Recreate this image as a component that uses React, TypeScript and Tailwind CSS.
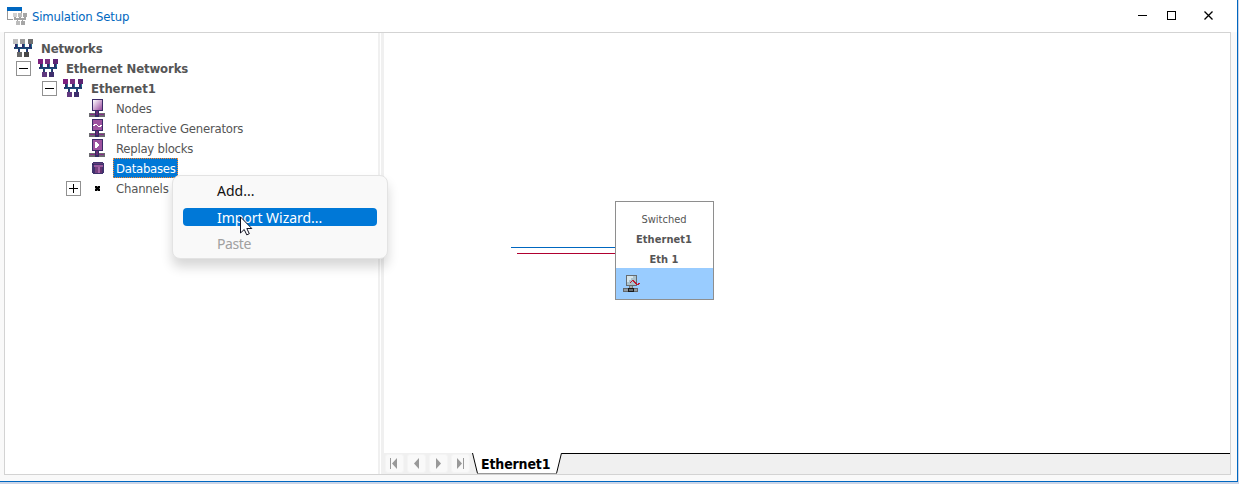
import React from "react";

const ui = "font-['DejaVu_Sans_Condensed','DejaVu_Sans',sans-serif] [font-stretch:75%]";

function NetIcon({ gray = false }: { gray?: boolean }) {
  const c = gray
    ? ["#c0c0c0", "#9c9c9c", "#707070", "#686868", "#484848"]
    : ["#7b1f7d", "#783080", "#5c2472", "#60387f", "#3f2e6d"];
  return (
    <svg width="20" height="18" shapeRendering="crispEdges" className="shrink-0">
      <path d="M2 5h2v3h-2zM9 5h2v3h-2zM16 5h2v3h-2zM5 10h2v3h-2zM13 10h2v3h-2z" fill="#2f2a68" />
      <path d="M4 5h1v4h-1zM11 5h1v4h-1zM18 5h1v4h-1z" fill="#1f7390" />
      <path d="M1 8h18v2h-18z" fill="#20386f" />
      <path d="M2 9h16v1h-16zM6 10h1v3h-1zM13 10h1v3h-1z" fill="#1b4c78" />
      <rect x="0" y="0" width="5" height="5" fill={c[0]} />
      <rect x="7" y="0" width="5" height="5" fill={c[1]} />
      <rect x="15" y="0" width="5" height="5" fill={c[2]} />
      <rect x="4" y="13" width="5" height="5" fill={c[3]} />
      <rect x="11" y="13" width="5" height="5" fill={c[4]} />
    </svg>
  );
}

function NodeIcon({ kind }: { kind: "node" | "wave" | "play" }) {
  return (
    <svg width="16" height="18" shapeRendering="crispEdges" className="shrink-0">
      <defs>
        <linearGradient id="screen" x1="0" y1="0" x2="1" y2="1">
          <stop offset="0" stopColor="#fff" />
          <stop offset=".55" stopColor="#c99ccc" />
          <stop offset="1" stopColor="#984b9b" />
        </linearGradient>
      </defs>
      <rect x="0" y="14" width="16" height="4" fill="#6b6b70" />
      <rect x="1" y="15" width="14" height="1" fill="#852d87" />
      <rect x="6" y="11" width="4" height="7" fill="#352c62" />
      <rect x="7" y="11" width="2" height="5" fill="#672c78" />
      <rect x="3" y="0" width="11" height="12" fill="#3b2b67" />
      <rect x="4" y="1" width="9" height="10" fill={kind === "node" ? "url(#screen)" : "#9e529f"} />
      {kind === "wave" && <path d="M4 6h1v-1h3v1h1v1h2v-1h2v1h-1v1h-3v-1h-1v-1h-2v1h-2z" fill="#fff" />}
      {kind === "play" && <path d="M6 3h2v1h1v1h1v2h-1v1h-1v1h-2z" fill="#fff" />}
    </svg>
  );
}

function DatabaseIcon() {
  return (
    <svg width="12" height="12" className="ml-[3px] mr-px shrink-0" shapeRendering="crispEdges">
      <path d="M1 0h10v1h1v10h-1v1h-10v-1h-1v-10h1z" fill="#40336d" />
      <path d="M1 1h10v1h-10z" fill="#5f3878" />
      <path d="M2 3h9v2h-9z" fill="#9a5a9e" />
      <path d="M3 5h3v6h-3z" fill="#75407f" />
      <path d="M6 5h2v6h-2z" fill="#a566a8" />
      <path d="M8 5h2v6h-2z" fill="#65306f" />
      <path d="M0 2h2v1h-2z" fill="#2d2859" />
    </svg>
  );
}

function Expander({ plus = false }: { plus?: boolean }) {
  return (
    <svg width="15" height="15" className="shrink-0" shapeRendering="crispEdges">
      <rect width="15" height="15" fill="#919191" />
      <rect x="1" y="1" width="13" height="13" fill="#fff" />
      <rect x="3" y="7" width="9" height="1" fill="#000" />
      {plus && <rect x="7" y="3" width="1" height="9" fill="#000" />}
    </svg>
  );
}

function NavButton({ d }: { d: string }) {
  return (
    <div className="flex h-[19px] w-[19px] shrink-0 items-center justify-center rounded-[3px] border border-[#f4f4f4] bg-[#f9f9f9]">
      <svg width="11" height="11" className="shrink-0"><path d={d} fill="#999" /></svg>
    </div>
  );
}

function Tree() {
  return (
    <div className="w-[373px] shrink-0 pt-[5px] text-[13px] text-[#555]">
      <div className="flex h-5 items-center pl-2 font-bold">
        <NetIcon gray /><span className="ml-[8px] mt-0.5 tracking-[-0.15px]">Networks</span>
      </div>
      <div className="flex h-5 items-center pl-[11px] font-bold">
        <Expander /><span className="w-[7px]" /><NetIcon />
        <span className="ml-[8px] mt-0.5 tracking-[-0.12px]">Ethernet Networks</span>
      </div>
      <div className="flex h-5 items-center pl-[37px] font-bold">
        <Expander /><span className="w-[6px]" /><NetIcon />
        <span className="ml-[8px] mt-0.5 tracking-[-0.1px]">Ethernet1</span>
      </div>
      <div className="flex h-5 items-center pl-[84px]">
        <NodeIcon kind="node" /><span className="ml-[11px] mt-0.5 tracking-[-0.2px]">Nodes</span>
      </div>
      <div className="flex h-5 items-center pl-[84px]">
        <NodeIcon kind="wave" /><span className="ml-[11px] mt-0.5 tracking-[-0.23px]">Interactive Generators</span>
      </div>
      <div className="flex h-5 items-center pl-[84px]">
        <NodeIcon kind="play" /><span className="ml-[11px] mt-0.5 tracking-[-0.25px]">Replay blocks</span>
      </div>
      <div className="flex h-5 items-center pl-[84px]">
        <DatabaseIcon />
        <span className="ml-2 flex h-5 w-[65px] items-center whitespace-nowrap border border-dotted border-[#ff8728] bg-[#0078d7] pl-[2px] pt-0.5 tracking-[-0.25px] text-white">Databases</span>
      </div>
      <div className="flex h-5 items-center pl-[61px]">
        <Expander plus />
        <svg width="5" height="5" className="ml-[14px] shrink-0" shapeRendering="crispEdges">
          <rect width="5" height="5" fill="#777" />
          <path d="M0 0h2v1h1v-1h2v2h-1v1h1v2h-2v-1h-1v1h-2v-2h1v-1h-1z" fill="#000" />
        </svg>
        <span className="ml-4 mt-0.5 tracking-[-0.2px]">Channels</span>
      </div>
    </div>
  );
}

function ContextMenu() {
  return (
    <div className="absolute left-[172px] top-[175px] h-[84px] w-[216px] rounded-[8px] border border-[#e3e3e3] bg-[#f9f9f9] px-[10px] pt-[2px] font-['Noto_Sans','Open_Sans',sans-serif] text-[14px] shadow-[0_8px_12px_rgba(0,0,0,0.16)]">
      <div className="flex h-[26px] items-center pb-px pl-[34px] tracking-[0px] text-[#111]">Add...</div>
      <div className="flex h-[26px] items-center">
        <div className="flex h-[18px] w-full items-center rounded-[4px] bg-[#0078d7] pl-[34px] tracking-[-0.04px] text-white">Import Wizard...</div>
      </div>
      <div className="flex h-[26px] items-center pl-[34px] tracking-[-0.4px] text-[#a0a0a0]">Paste</div>
      <svg width="13" height="20" className="absolute left-[67px] top-[40px]">
        <path d="M.5 1v16l3.7-3.5 2.6 5.4 2.5-1.2-2.5-5.2h5z" fill="#fff" stroke="#101020" strokeWidth="1" />
      </svg>
    </div>
  );
}

function NetworkNode() {
  return (
    <div className="absolute left-[231px] top-[168px] flex h-[99px] w-[99px] flex-col border border-[#8e8e8e] bg-white text-center text-[11px] text-[#555]">
      <div className="flex h-[66px] flex-col pr-px pt-[8px] leading-5">
        <span>Switched</span>
        <span className="font-bold tracking-[0.05px]">Ethernet1</span>
        <span className="font-bold">Eth 1</span>
      </div>
      <div className="flex flex-1 bg-[#99ccff] pl-[7px] pt-[7px]">
        <svg width="17" height="17" shapeRendering="crispEdges">
          <rect x="3" y="0" width="11" height="11" fill="#656b70" />
          <rect x="4" y="1" width="9" height="9" fill="#aac1cd" />
          <path d="M4 1h6v2h-2v2h-2v2h-2z" fill="#d5e4eb" />
          <path d="M6 11h4v2h-4z" fill="#777" />
          <path d="M7 11h2v2h-2z" fill="#aaa" />
          <path d="M0 13h15v4h-15z" fill="#62676b" />
          <path d="M1 14h4v2h-4zM11 14h3v2h-3z" fill="#929ba3" />
          <path d="M5 13h6v4h-6z" fill="#18191b" />
          <path d="M6 14h4v2h-4z" fill="#666b70" />
          <path d="M7 7h1v-1h1v-1h2v1h1v1h1v1h1v1h1v-1h2v1h-1v1h-3v-1h-1v-1h-1v-1h-1v-1h-1v1h-1v1h-1z" fill="#c01830" />
        </svg>
      </div>
    </div>
  );
}

function TabBar() {
  return (
    <div className="flex h-[21px] items-center bg-[#f0f0f0] pl-px">
      <div className="flex gap-[3px]">
        <NavButton d="M1 0h1v11h-1zM8 0v11l-5-5.5z" />
        <NavButton d="M8 0v11l-5-5.5z" />
        <NavButton d="M3 0v11l5-5.5z" />
        <NavButton d="M2 0v11l5-5.5zM8 0h1v11h-1z" />
      </div>
      <div className="ml-0.5 flex h-[21px] flex-1 items-start">
        <svg width="6" height="21" className="shrink-0"><path d="M0 0H6V21H5z" fill="#fff" /><path d="M.5 0L5.5 20.5" stroke="#000" /></svg>
        <div className="flex h-[21px] w-[78px] shrink-0 items-center whitespace-nowrap border-b border-[#999] bg-white pl-[3px] pt-0.5 text-[14px] font-bold tracking-[-0.15px] text-black">Ethernet1</div>
        <svg width="6" height="21" className="shrink-0"><path d="M0 0H6L1 21H0z" fill="#fff" /><path d="M.5 20.5L5.5 0" stroke="#000" /></svg>
        <div className="h-[21px] flex-1 border-t border-black" />
      </div>
    </div>
  );
}

export default function App() {
  return (
    <div className={`relative flex h-[484px] w-[1239px] flex-col overflow-hidden bg-[#cbd5e8] ${ui}`}>
      <div className="flex h-[482px] w-[1238px] flex-col border-b border-r border-[#0067c0] bg-white">
        <header className="flex h-8 shrink-0 items-center pl-[7px]">
          <svg width="20" height="18" shapeRendering="crispEdges" className="shrink-0">
            <path d="M0 4h1v8h5v1h-6zM14 4h1v2h-1z" fill="#999" />
            <rect width="15" height="4" fill="#0067c0" />
            <path d="M6 6h4v4h-4z" fill="#d0d0d0" />
            <path d="M11 6h4v4h-4zM9 14h4v4h-4z" fill="#bcbcbc" />
            <path d="M16 6h4v4h-4zM14 14h4v4h-4z" fill="#a6a6a6" />
            <path d="M7 10h2v1h3v-1h2v1h3v-1h2v3h-3v1h-1v-1h-4v1h-1v-1h-3z" fill="#a3a3a3" />
          </svg>
          <span className="ml-[5px] mt-0.5 text-[13px] tracking-[-0.18px] text-[#0067c0]">Simulation Setup</span>
          <svg width="75" height="12" className="ml-auto mr-[24px]" fill="none" stroke="#000" shapeRendering="crispEdges">
            <path d="M0 5.5h9M29.5 1.5h8v8h-8z" />
            <path d="M66.5 1.5l8 8M74.5 1.5l-8 8" strokeWidth="1.3" shapeRendering="auto" />
          </svg>
        </header>
        <div className="flex h-[449px] shrink-0 bg-[#f9f9f9] pb-[6px] pl-1 pr-[6px]">
          <main className="flex h-[443px] w-[1227px] border border-[#d3d3d3] bg-white">
            <Tree />
            <div className="flex w-[6px] shrink-0 justify-between bg-white">
              <span className="w-[2px] bg-[#f0f0f0]" /><span className="w-[3px] bg-[#f0f0f0]" />
            </div>
            <div className="flex min-w-0 flex-1 flex-col">
              <div className="relative flex-1">
                <div className="absolute left-[127px] top-[214px] h-px w-[104px] bg-[#0067c0]" />
                <div className="absolute left-[133px] top-[220px] h-px w-[98px] bg-[#b00030]" />
                <NetworkNode />
              </div>
              <TabBar />
            </div>
          </main>
        </div>
      </div>
      <ContextMenu />
    </div>
  );
}
